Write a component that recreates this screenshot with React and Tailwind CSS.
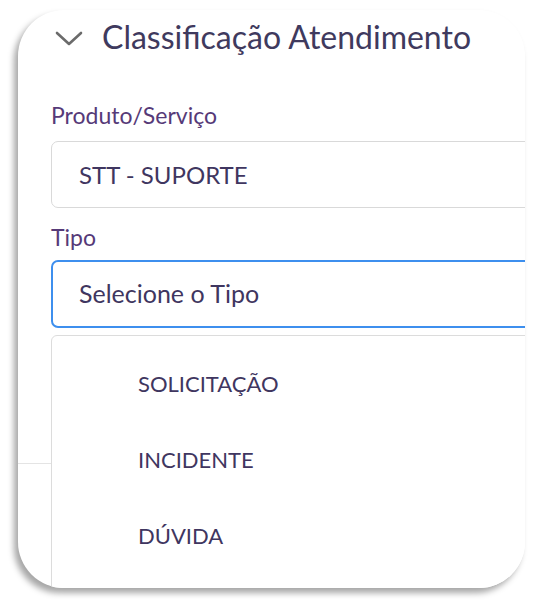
import React from 'react';

const options = ['SOLICITAÇÃO', 'INCIDENTE', 'DÚVIDA'];

const App = () => {
  return (
    <div className="min-h-screen bg-white pl-[18px] pt-[10px] font-['Lato','Open_Sans',sans-serif]">
      <div className="relative w-[507px] h-[578px] rounded-[46px] bg-white overflow-hidden shadow-[-4px_5px_6px_rgba(0,0,0,0.35)]">
        <div className="flex items-center pt-[6px] pl-[37px]">
          <svg width="28" height="16" viewBox="0 0 28 16" fill="none" className="mt-[4px]">
            <path d="M2 2 L14 13 L26 2" stroke="#6b6b6b" strokeWidth="2.6" strokeLinecap="round" strokeLinejoin="round" />
          </svg>
          <h2 className="ml-[19px] text-[32px] leading-[41px] text-[#3f3a5e]">Classificação Atendimento</h2>
        </div>

        <div className="pl-[33px] pt-[45px] border-b border-[#e4e4e4] h-[407px]">
          <label className="block text-[23px] leading-[27px] text-[#563a78]">Produto/Serviço</label>
          <div className="mt-[12px] w-[520px] h-[67px] flex items-center pl-[27px] border border-[#d9d9d9] rounded-[7px] text-[24px] text-[#3f3660]">
            STT - SUPORTE
          </div>
          <label className="block mt-[16px] text-[23px] leading-[27px] text-[#563a78]">Tipo</label>
          <div className="relative mt-[9px]">
            <div className="w-[520px] h-[68px] flex items-center pl-[26px] border-2 border-[#3d8fee] rounded-[7px] text-[25px] text-[#3f3660]">
              Selecione o Tipo
            </div>
            <ul className="absolute left-0 top-[75px] w-[520px] h-[300px] bg-white border border-[#dcdcdc] rounded-[6px] pt-[9px] pl-[86px]">
              {options.map((o) => (
                <li key={o} className="h-[76px] flex items-center text-[22px] text-[#3f3660]">
                  {o}
                </li>
              ))}
            </ul>
          </div>
        </div>
      </div>
    </div>
  );
};

export default App;
